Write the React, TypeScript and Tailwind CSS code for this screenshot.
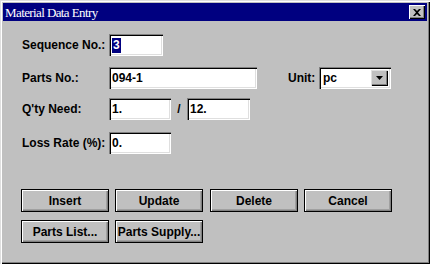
import React from "react";

const sunken =
  "bg-white shadow-[inset_1px_1px_#808080,inset_2px_2px_#000,inset_-1px_-1px_#fff,inset_-2px_-2px_#dfdfdf]";
const raised =
  "bg-[#c0c0c0] border border-black shadow-[inset_1px_1px_#fff,inset_-1px_-1px_#808080,inset_-2px_-2px_#a0a0a0]";

function Field({ w, children }: { w: string; children?: React.ReactNode }) {
  return (
    <div className={`${sunken} ${w} h-[22px] flex items-center pl-[3px] text-[12px] font-bold text-black`}>
      {children}
    </div>
  );
}

function Btn({ label, className = "" }: { label: string; className?: string }) {
  return (
    <div
      className={`${raised} w-[88px] h-[23px] flex items-center justify-center text-[12px] font-bold text-black ${className}`}
    >
      {label}
    </div>
  );
}

function Label({ children }: { children: React.ReactNode }) {
  return <div className="w-[87px] text-[12px] font-bold text-black">{children}</div>;
}

export default function App() {
  return (
    <div
      className="w-[430px] h-[264px] bg-[#c0c0c0] p-[3px] flex flex-col shadow-[inset_1px_1px_#dfdfdf,inset_2px_2px_#fff,inset_-1px_-1px_#000,inset_-2px_-2px_#808080]"
      style={{ fontFamily: '"Liberation Sans", Arial, sans-serif' }}
    >
      <div className="h-[18px] bg-[#000080] flex items-center justify-between pl-[2px] pr-[2px]">
        <span
          className="text-white text-[13px] tracking-[-0.6px] leading-none"
          style={{ fontFamily: '"Liberation Serif", "Times New Roman", serif' }}
        >
          Material Data Entry
        </span>
        <div className="bg-[#c0c0c0] shadow-[inset_1px_1px_#fff,inset_-1px_-1px_#000,inset_-2px_-2px_#808080] w-[16px] h-[14px] flex items-center justify-center">
          <svg width="8" height="7" viewBox="0 0 8 7">
            <path d="M0 0h2l2 2 2-2h2L5 3.5 8 7H6L4 5 2 7H0l3-3.5z" fill="#000" />
          </svg>
        </div>
      </div>

      <div className="flex flex-col pl-[19px]">
        <div className="flex items-center mt-[13px]">
          <Label>Sequence No.:</Label>
          <Field w="w-[54px]">
            <span className="bg-[#000080] text-white px-[1px] leading-[15px]">3</span>
          </Field>
        </div>

        <div className="flex items-center mt-[11px]">
          <Label>Parts No.:</Label>
          <Field w="w-[148px]">094-1</Field>
          <div className="ml-[31px] w-[31px] text-[12px] font-bold text-black">Unit:</div>
          <div className={`${sunken} w-[72px] h-[22px] flex items-center justify-between pl-[4px] pr-[3px] text-[12px] font-bold text-black`}>
            <span>pc</span>
            <div className="w-[17px] h-[16px] bg-[#c0c0c0] shadow-[inset_1px_1px_#dfdfdf,inset_-1px_-1px_#000,inset_-2px_-2px_#808080] flex items-center justify-center">
              <svg width="7" height="4" viewBox="0 0 7 4">
                <path d="M0 0h7L3.5 4z" fill="#000" />
              </svg>
            </div>
          </div>
        </div>

        <div className="flex items-center mt-[9px]">
          <Label>Q'ty Need:</Label>
          <Field w="w-[62px]">1.</Field>
          <div className="w-[16px] text-center text-[12px] font-bold text-black">/</div>
          <Field w="w-[63px]">12.</Field>
        </div>

        <div className="flex items-center mt-[12px]">
          <Label>Loss Rate (%):</Label>
          <Field w="w-[62px]">0.</Field>
        </div>

        <div className="flex mt-[35px] ml-[-1px]">
          <Btn label="Insert" />
          <Btn label="Update" className="ml-[6px]" />
          <Btn label="Delete" className="ml-[7px]" />
          <Btn label="Cancel" className="ml-[6px]" />
        </div>
        <div className="flex mt-[8px] ml-[-1px]">
          <Btn label="Parts List..." />
          <Btn label="Parts Supply..." className="ml-[6px]" />
        </div>
      </div>
    </div>
  );
}
